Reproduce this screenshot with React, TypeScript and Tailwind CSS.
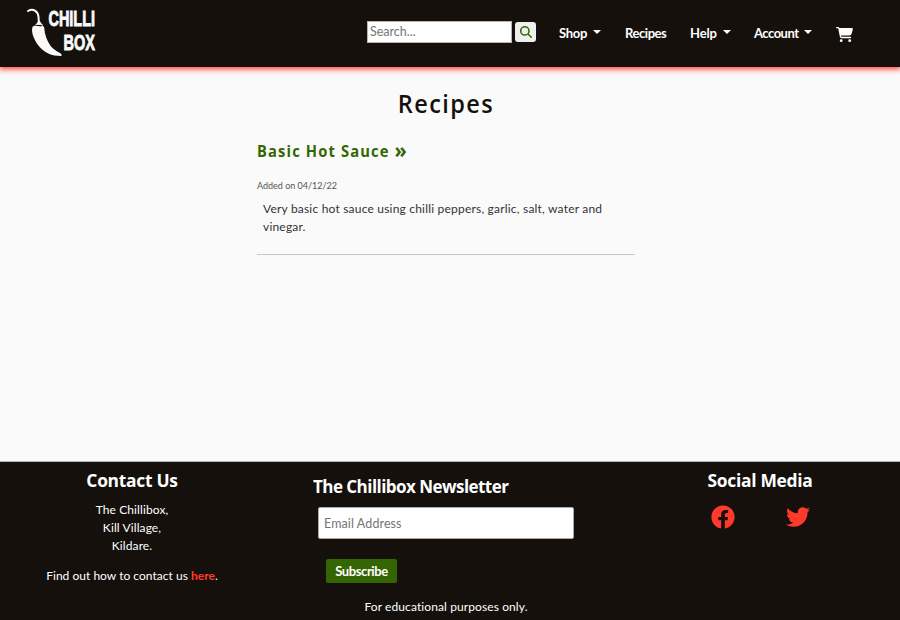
import React from "react";
import { FaFacebook, FaTwitter } from "react-icons/fa";
import { FaCartShopping, FaMagnifyingGlass } from "react-icons/fa6";

function Caret() {
  return <span className="mt-[-5px] h-0 w-0 border-x-[4px] border-t-[4px] border-x-transparent border-t-white" />;
}

function Logo() {
  return (
    <svg width="76" height="56" viewBox="0 0 76 56" className="block overflow-visible text-[#fafafa]" fill="currentColor">
      <path d="M3 5C8 2 13 5 13.5 11L14 18" fill="none" stroke="currentColor" strokeWidth="2" strokeLinecap="round" />
      <path d="M9.500 19.500C12 18 12.500 16 13 15L15 15C16 18 18 18 18 20C16 18.500 12 18.500 9.500 19.500Z" />
      <path d="M7.500 21C10 18.500 13 21 17.500 20C20 20 19 24 20.500 29C23 38 27 43 35 47C37 48 37 50 36 50C27 50 19 47 13 39C8 32 6 25 7.500 21Z" />
      <text x="23.5" y="19.5" textLength="46.5" lengthAdjust="spacingAndGlyphs" stroke="currentColor" strokeWidth="0.9" className="font-['Liberation_Sans_Narrow','Liberation_Sans',sans-serif] text-[22.5px] font-bold">CHILLI</text>
      <text x="38.5" y="43.5" textLength="31.5" lengthAdjust="spacingAndGlyphs" stroke="currentColor" strokeWidth="0.9" className="font-['Liberation_Sans_Narrow','Liberation_Sans',sans-serif] text-[22.5px] font-bold">BOX</text>
    </svg>
  );
}

export default function App() {
  return (
    <div className="flex h-[620px] w-[900px] flex-col overflow-hidden bg-[#fafafa] font-['Lato',sans-serif] text-[12px] text-[#15100c] [font-variant-ligatures:none]">
      <header className="z-10 flex h-[67px] shrink-0 bg-[#15100c] text-white shadow-[0_1px_6px_1px_#ff392b]">
        <div className="ml-[25px] mt-[6px] w-[76px]"><Logo /></div>
        <div className="ml-[266px] mt-[21px] flex h-[22px] items-center">
          <input placeholder="Search..." className="h-[22px] w-[145px] border border-[#b5b5b5] bg-white px-[2px] pb-[2px] text-[12.5px] text-black outline-none placeholder:text-[#757575]" />
          <button className="ml-[3px] flex h-[20px] w-[21px] items-center justify-center rounded-[3px] bg-[#efefef] text-[#336600]"><FaMagnifyingGlass size={12} /></button>
        </div>
        <nav className="mt-[24px] flex h-[20px] items-center text-[13px] font-bold">
          <a className="ml-[23px] flex w-[42px] items-center justify-between tracking-[-0.3px]">Shop<Caret /></a>
          <a className="ml-[24px] w-[42px] tracking-[-0.45px]">Recipes</a>
          <a className="ml-[23px] flex w-[41px] items-center justify-between tracking-[-0.15px]">Help<Caret /></a>
          <a className="ml-[23px] flex w-[58px] items-center justify-between tracking-[-0.5px]">Account<Caret /></a>
          <FaCartShopping className="ml-[24px] mt-[1px]" size={17} />
        </nav>
      </header>
      <main className="ml-[257px] flex h-[394px] w-[378px] shrink-0 flex-col">
        <h1 className="mt-[18px] h-[36px] scale-x-[0.94] text-center font-['Open_Sans',sans-serif] text-[25px] font-[650] leading-[36px] tracking-[1.5px]">Recipes</h1>
        <h2 className="mt-[18px] flex h-[24px] origin-left scale-x-[0.95] whitespace-nowrap font-['Open_Sans',sans-serif] text-[15.5px] font-bold leading-[24px] tracking-[1.2px] text-[#336600]">Basic Hot Sauce<span className="ml-[5px] text-[21px] leading-[22px]">»</span></h2>
        <p className="mt-[16px] h-[14px] text-[9px] leading-[14px] text-[#555]">Added on 04/12/22</p>
        <p className="mt-[7px] h-[36px] whitespace-nowrap pl-[6px] leading-[18px] tracking-[0.2px] text-[#333]">Very basic hot sauce using chilli peppers, garlic, salt, water and<br />vinegar.</p>
        <hr className="mt-[18px] border-[#c8c8c8]" />
      </main>
      <footer className="flex h-[159px] shrink-0 flex-col border-t border-[#b5b5b5] bg-[#15100c] text-white">
        <div className="flex h-[136px]">
          <section className="w-[264px] text-center leading-[18px]">
            <h3 className="mt-[4px] scale-x-[0.94] font-['Open_Sans',sans-serif] text-[18.5px] font-bold leading-[28px] tracking-[-0.3px]">Contact Us</h3>
            <p className="mt-[7px] tracking-[0.1px]">The Chillibox,<br />Kill Village,<br />Kildare.</p>
            <p className="mt-[12px] tracking-[0.02px]">Find out how to contact us <a className="font-bold text-[#ff392b]">here</a>.</p>
          </section>
          <section className="ml-[49px] w-[261px]">
            <h3 className="mt-[10px] origin-left scale-x-[0.92] whitespace-nowrap font-['Open_Sans',sans-serif] text-[18.5px] font-bold leading-[28px] tracking-[-0.6px]">The Chillibox Newsletter</h3>
            <input placeholder="Email Address" className="ml-[5px] mt-[7px] block h-[32px] w-[256px] rounded-[2px] border border-[#aaa] bg-white px-[5px] text-[12.5px] tracking-[0.1px] text-black outline-none placeholder:text-[#757575]" />
            <button className="ml-[13px] mt-[20px] block h-[24px] w-[71px] rounded-[2px] bg-[#336600] pt-px text-[13px] font-bold tracking-[-0.4px]">Subscribe</button>
          </section>
          <section className="ml-[62px] w-[248px] text-center">
            <h3 className="mt-[4px] scale-x-[0.94] font-['Open_Sans',sans-serif] text-[18.5px] font-bold leading-[28px] tracking-[-0.3px]">Social Media</h3>
            <div className="mt-[11px] flex pl-[75px] text-[#ff392b]"><FaFacebook size={24} /><FaTwitter size={24} className="ml-[51px]" /></div>
          </section>
        </div>
        <p className="pr-[8px] text-center leading-[18px] tracking-[0.1px]">For educational purposes only.</p>
      </footer>
    </div>
  );
}
